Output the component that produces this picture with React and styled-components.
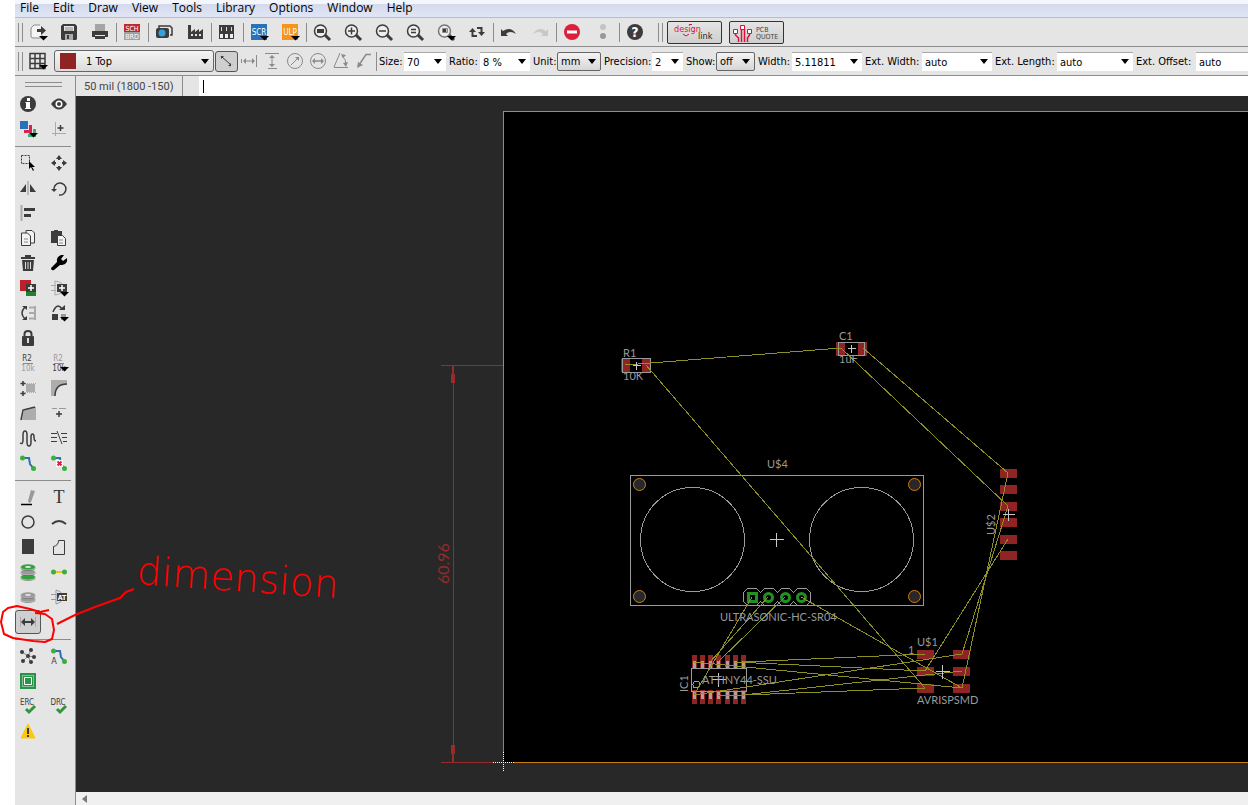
import React from "react";
import styled, { createGlobalStyle, css } from "styled-components";

const DARK = "#3c3c3c";
const MID = "#8a8a8a";
const SILK = "#9a9a9a";
const COPPER = "#8f2424";
const WIRE = "#8f8f24";

const IconText = styled.text`
  font-family: ${(p) => (p.$serif ? '"Liberation Serif", serif' : '"DejaVu Sans Condensed", sans-serif')};
  font-size: ${(p) => p.$size}px;
  font-weight: ${(p) => (p.$bold ? "bold" : "normal")};
  text-anchor: middle;
`;

function Lens({ grey, children }) {
  return (
    <>
      <path d="M3 3l5 5" stroke={DARK} strokeWidth="3" />
      <circle cx="-1.5" cy="-1" r="6" fill="#eee" stroke={grey ? "#777" : DARK} strokeWidth="1.5" />
      {children}
    </>
  );
}

function Route() {
  return (
    <>
      <path d="M-5 -5h6l1 6 4 5" fill="none" stroke="#2a72b8" strokeWidth="2" />
      <circle cx="-5.5" cy="-5" r="2.5" fill="#3aaf3c" />
      <circle cx="5.5" cy="5.5" r="2.5" fill="#3aaf3c" />
    </>
  );
}

function Stack({ ys, colors }) {
  return ys.map((y, i) => (
    <g key={y}>
      <ellipse cy={y + 1} rx="7.5" ry="3" fill={DARK} opacity="0.6" />
      <ellipse cy={y} rx="7.5" ry="3" fill={colors[i]} stroke="#e5e5e5" strokeWidth="0.5" />
      {i === ys.length - 1 && <ellipse cy={y} rx="3" ry="1" fill="#e5e5e5" />}
    </g>
  ));
}

/* Every icon is drawn around its own centre (0, 0). */
const icons = {
  export: (
    <>
      <path d="M2 -7h-6l-3 3v8q0 2 2 2h7q2 0 2-2v-1" fill="#f4f4f4" stroke={MID} />
      <path d="M-1 -3h4v-3l5 4.5-5 4.5v-3h-4z" fill={DARK} />
    </>
  ),
  save: (
    <>
      <path d="M-8 -6l2-2h12l2 2v13l-1 1h-14l-1-1z" fill={DARK} />
      <path d="M-5 -6h10v5h-10z" fill="#e5e5e5" />
      <path d="M-4 -4h8M-4 -2h8" stroke={MID} />
      <path d="M-4 2h8v6h-8z" fill="#aaa" />
      <path d="M-2 3h2v4h-2z" fill={DARK} />
    </>
  ),
  print: (
    <>
      <path d="M-5 -8h10v7h-10z" fill="#a5a5a5" />
      <path d="M-8 -1h16v6h-3v-2h-10v2h-3z" fill={DARK} />
      <path d="M-5 4h10v3h-10z" fill={DARK} />
    </>
  ),
  schbrd: (
    <>
      <path d="M-8 -8h16v8h-16z" fill="#c1272d" />
      <path d="M-8 0h16v8h-16z" fill="#a0a0a0" />
      <IconText x="0" y="-1" $size={7} fill="#fff">SCH</IconText>
      <IconText x="0" y="7" $size={7} fill="#fff">BRD</IconText>
    </>
  ),
  camera: (
    <>
      <path d="M-5 -4v-2h11l2 2v7h-2" fill="none" stroke={DARK} strokeWidth="1.5" />
      <rect x="-8" y="-4" width="13" height="10" rx="2" fill={DARK} />
      <circle cx="-2" cy="1" r="3.5" fill="#35a0de" />
    </>
  ),
  factory: (
    <>
      <path d="M-7 7v-14h3v7l4-3v3l4-3v3l4-3v10z" fill={DARK} />
      <path d="M-4 2h2v2h-2zM0 2h2v2h-2zM4 2h2v2h-2z" fill="#e5e5e5" />
    </>
  ),
  library: (
    <>
      {[-8, -3, 2].map((x) => (
        <g key={x}>
          <rect x={x + 0.5} y="-6.5" width="4" height="13" fill="#eee" stroke={DARK} />
          <path d={`M${x + 0.5} -6h4v8h-4z`} fill={DARK} />
          <path d={`M${x + 2.5} -5v4`} stroke="#ddd" />
        </g>
      ))}
    </>
  ),
  scr: (
    <>
      <path d="M-8 -8h16v16h-16z" fill="#2a72b8" />
      <IconText x="0" y="3" $size={8} fill="#fff">SCR</IconText>
    </>
  ),
  ulp: (
    <>
      <path d="M-8 -8h16v16h-16z" fill="#f7941d" />
      <IconText x="0" y="3" $size={8} fill="#fff">ULP</IconText>
    </>
  ),
  zoomFit: <Lens><path d="M-5 -3h7v4h-7z" fill={DARK} /></Lens>,
  zoomIn: <Lens><path d="M-5 -1h7M-1.5 -4.5v7" stroke={DARK} strokeWidth="1.5" /></Lens>,
  zoomOut: <Lens><path d="M-5 -1h7" stroke={DARK} strokeWidth="1.5" /></Lens>,
  zoomRedraw: <Lens><path d="M-4 -2.5h5M-4 .5h5" stroke={DARK} strokeWidth="1.5" /></Lens>,
  zoomSelect: (
    <Lens grey>
      <path d="M-3.5 -3.5h5v4h-5z" fill="#bbb" stroke={MID} />
      <path d="M-3 -3h3v3h-3z" fill={DARK} />
    </Lens>
  ),
  refresh: (
    <>
      <path d="M-4.5 -1v5h4.500M4.5 1v-5h-4.500" fill="none" stroke={DARK} strokeWidth="2" />
      <path d="M-8 0h7l-3.5-4zM1 0h7l-3.5 4z" fill={DARK} />
    </>
  ),
  undo: <path d="M-8 -3v7h7l-2-2q4-4 10 0q-5-8-13-3z" fill={DARK} />,
  redo: <path d="M8 -3v7h-7l2-2q-4-4-10 0q5-8 13-3z" fill="#c8c8c8" />,
  stop: (
    <>
      <circle r="8" fill="#dc1f3a" />
      <path d="M-5 -1.5h10v3h-10z" fill="#fff" />
    </>
  ),
  signal: (
    <>
      <circle cy="-5" r="3" fill="#c4c4c4" />
      <circle cy="4" r="3" fill="#999" />
    </>
  ),
  help: (
    <>
      <circle r="8" fill={DARK} />
      <IconText x="0" y="5" $size={14} $bold fill="#fff">?</IconText>
    </>
  ),
  grid: (
    <path
      d="M-8 -7.5h15v15h-15zM-8 -2.5h15M-8 2.5h15M-3 -7.5v15M2 -7.5v15"
      fill="none"
      stroke={DARK}
      strokeWidth="1.5"
    />
  ),
  dimParallel: (
    <>
      <path d="M-4 -4l8 7" stroke={DARK} />
      <path d="M-5 -5h3l-3 3zM5 5h-3l3-3z" fill={DARK} />
      <path d="M-7 -3l4-4M3 7l4-4" stroke="#aaa" strokeDasharray="1 1" />
    </>
  ),
  dimHorizontal: (
    <>
      <path d="M-5 0h10" stroke={MID} />
      <path d="M-6 0l3-3v6zM6 0l-3-3v6z" fill={MID} />
      <path d="M7.5 -6v12" stroke={MID} />
      <path d="M-7.5 -2v4" stroke={MID} />
    </>
  ),
  dimVertical: (
    <>
      <path d="M0 -4v8M-7 -7.5h14M-4 7.5h9" stroke={MID} />
      <path d="M0 -6l3 3h-6zM0 6l3-3h-6z" fill={MID} />
    </>
  ),
  dimRadius: (
    <>
      <circle r="7.5" fill="none" stroke={MID} />
      <path d="M-4 4l7-7" stroke={MID} />
      <path d="M4 -4v4l-4-4z" fill={MID} />
    </>
  ),
  dimDiameter: (
    <>
      <circle r="7.5" fill="none" stroke={MID} />
      <path d="M-4 0h8" stroke={MID} strokeWidth="1.5" />
      <path d="M-6 0l3-3v6zM6 0l-3-3v6z" fill={MID} />
    </>
  ),
  dimAngle: (
    <>
      <path d="M-7 6.5h14M-7 6l6-14M1 -5q4 3 4 8" fill="none" stroke={MID} />
      <path d="M0 -7l5 1-3 3zM7 1l-2 5-3-4z" fill={MID} />
    </>
  ),
  dimLeader: (
    <>
      <path d="M7 -6.5h-5l-6 9" fill="none" stroke={MID} strokeWidth="1.5" />
      <path d="M-7 7l1-6 5 3z" fill={MID} />
    </>
  ),
  info: (
    <>
      <circle r="8" fill={DARK} />
      <path d="M-1 -6h3v3h-3zM-2 -2h4v6h1v1h-6v-1h1v-5h-1z" fill="#fff" />
    </>
  ),
  show: (
    <>
      <path d="M-8 0q8-11 16 0q-8 11-16 0z" fill={DARK} />
      <circle r="3.5" fill="#fff" />
      <circle r="2" fill={DARK} />
    </>
  ),
  layers: (
    <>
      <path d="M-8 -8h8v8h-8z" fill="#2a72b8" />
      <path d="M1 -4h3v8h-8v-3h5z" fill="#dc1f54" />
      <path d="M5 0h3v8h-8v-3h5z" fill="#36b070" />
    </>
  ),
  mark: (
    <>
      <path d="M-3.5 -7v14M-7 4.5h14" stroke="#aaa" />
      <path d="M1.5 -4v6M-1.5 -1h6" stroke={DARK} strokeWidth="1.5" />
    </>
  ),
  group: (
    <>
      <path d="M-6.5 -7.5h8v8h-8z" fill="none" stroke={DARK} strokeDasharray="2 1" />
      <path d="M1 -2v8l2-2 2 4 1-1-2-3h3z" fill="#000" />
    </>
  ),
  move: (
    <>
      <path d="M0 -8l3 4h-6zM0 8l3-4h-6zM-8 0l4-3v6zM8 0l-4-3v6z" fill={DARK} />
      <path d="M0 -5v2M0 5v-2M-5 0h2M5 0h-2" stroke={DARK} strokeWidth="2" />
    </>
  ),
  mirror: (
    <>
      <path d="M-2 -4v8h-6zM2 -4v8h6z" fill={DARK} />
      <path d="M0 -7v14" stroke="#aaa" strokeWidth="1.5" />
    </>
  ),
  rotate: (
    <>
      <path d="M-5 2a6 6 0 1 1 5 5" fill="none" stroke={DARK} strokeWidth="1.5" />
      <path d="M-8 1h6l-3 3z" fill={DARK} />
    </>
  ),
  align: (
    <>
      <path d="M-6.5 -8v16" stroke="#aaa" strokeWidth="2" />
      <path d="M-4 -5h11v3h-11zM-4 1h7v3h-7z" fill={DARK} />
    </>
  ),
  copy: (
    <>
      <path d="M-2 -7.5h6l2.5 2.5v10h-8.5z" fill="#f2f2f2" stroke={DARK} />
      <path d="M-6.5 -5h6l3 3v9.5h-9z" fill="#f2f2f2" stroke={DARK} />
      <path d="M-4 1h4M-4 4h4" stroke={MID} />
    </>
  ),
  paste: (
    <>
      <path d="M-8 -7h3v-1h4v1h4v12h-11z" fill={DARK} />
      <path d="M-1.5 -2.5h5l3 3v7h-8z" fill="#f2f2f2" stroke={DARK} />
      <path d="M0 2h4M0 5h4" stroke={MID} />
    </>
  ),
  trash: (
    <>
      <path d="M-7 -6h4v-2h6v2h4v2h-14zM-6 -3h12l-1 11h-10z" fill={DARK} />
      <path d="M-2.5 -1v7M0 -1v7M2.5 -1v7" stroke="#ddd" />
    </>
  ),
  wrench: (
    <path
      d="M-8 5l6-6q-1-5 4-7l3 0-3 4 2 2 4-3q1 6-5 7h-2l-6 5q-3 1-3-2z"
      fill="#000"
    />
  ),
  add: (
    <>
      <path d="M-8 -8h11v11h-11z" fill="#bd1f2b" />
      <path d="M-2 0h10v8h-10z" fill="#23802b" />
      <path d="M-2 -4h10v8h-10z" fill={DARK} />
      <path d="M3 -3v6M0 0h6" stroke="#fff" strokeWidth="1.5" />
    </>
  ),
  addGate: (
    <>
      <path d="M-8 -2.5h5M-8 2.5h5M-4 -7q8 1 10 7q-2 6-10 7z" fill="none" stroke="#aaa" />
      <path d="M-2 -4h10v8h-10z" fill={DARK} />
      <path d="M3 -3v6M0 0h6" stroke="#fff" strokeWidth="1.5" />
    </>
  ),
  pinswap: (
    <>
      <path d="M-3 -6q-6 6 0 12" fill="none" stroke={DARK} strokeWidth="1.5" />
      <path d="M-6 -7h5v4zM-6 7h5v-4z" fill={DARK} />
      <path d="M7 -7v14M1 -5.5h6M1 0h6M1 5.5h6" stroke="#aaa" strokeWidth="2" />
    </>
  ),
  replace: (
    <>
      <path d="M-6 -1q4-10 9-3" fill="none" stroke={DARK} strokeWidth="1.5" />
      <path d="M0 -3h6v-5z" fill={DARK} />
      <path d="M-7 1h6v6h-6z" fill={DARK} />
      <path d="M2 1h5v6h-5z" fill="#999" />
    </>
  ),
  lock: (
    <>
      <path d="M-3.5 -1v-3q0-3 3.5-3t3.5 3v3" fill="none" stroke={DARK} strokeWidth="2" />
      <rect x="-6" y="-2" width="12" height="10" rx="1" fill={DARK} />
      <path d="M-1 0h2v5h-2z" fill="#ddd" />
    </>
  ),
  name: (
    <>
      <IconText x="-1" y="-2" $size={8} fill={DARK}>R2</IconText>
      <path d="M-5 .5h10" stroke={MID} />
      <IconText x="0" y="8" $size={8} fill="#999">10k</IconText>
    </>
  ),
  value: (
    <>
      <IconText x="-1" y="-2" $size={8} fill="#999">R2</IconText>
      <path d="M-5 .5h10" stroke={MID} />
      <IconText x="0" y="8" $size={8} fill={DARK}>10k</IconText>
    </>
  ),
  smash: (
    <>
      <path d="M-2 -4h9v8h-9z" fill="#b0acac" />
      <path d="M-3 -4.5h11M-3 4.5h11" stroke="#b0acac" strokeDasharray="1 1" />
      <path d="M-5 -7v5M-7.5 -4.5h5M-5 3v5M-7.5 5.5h5" stroke={DARK} strokeWidth="1.5" />
    </>
  ),
  miter: (
    <>
      <path d="M-8 -8h16v4q-12 0-12 12h-4z" fill="#b0acac" />
      <path d="M8 -4q-12 0-12 12" fill="none" stroke={DARK} strokeWidth="1.5" />
    </>
  ),
  split: (
    <>
      <path d="M-4 -4l12-2v13h-14z" fill="#b0acac" />
      <path d="M-7 7l2-10 12-3" fill="none" stroke={DARK} strokeWidth="1.5" />
    </>
  ),
  optimize: (
    <>
      <path d="M-7 -4.5h5M0 -4.5h7" stroke="#999" />
      <path d="M0 -2v6M-3 1h6" stroke={DARK} strokeWidth="1.5" />
    </>
  ),
  meander: (
    <path
      d="M-8 5q3 2 3-3v-5q0-4 2-4t2 4v7q0 4 2 4t2-4v-5q0-3 1.500-3t1.500 3q0 4 2 4"
      fill="none"
      stroke={DARK}
      strokeWidth="1.5"
    />
  ),
  ripLines: (
    <path
      d="M-8 -4.5h6M-8 -.5h6M-8 3.5h6M-2 -7l5 13M2 -4.5h6M3 -.5h5M4 3.5h4"
      stroke={DARK}
      fill="none"
    />
  ),
  route: <Route />,
  ripup: (
    <>
      <Route />
      <path d="M-3 -3h7v7h-7z" fill="#fff" />
      <path d="M-1.5 -1.5l4 4M2.5 -1.5l-4 4" stroke="#dc1f3a" strokeWidth="2" />
    </>
  ),
  wire: (
    <>
      <path d="M3 -7l4 1-4 11-2 1-1-2z" fill="#999" />
      <path d="M-7 7.5h11" stroke="#000" strokeWidth="1.5" />
    </>
  ),
  text: <IconText x="0" y="6" $size={18} $serif fill="#333">T</IconText>,
  circle: <circle r="6" fill="none" stroke={DARK} strokeWidth="1.5" />,
  arc: <path d="M-7 2q7-6 14 0" fill="none" stroke={DARK} strokeWidth="2" />,
  rect: <path d="M-6 -8h12v15h-12z" fill={DARK} />,
  polygon: <path d="M-5.5 7.5v-8q5-1 5-6h6v14z" fill="none" stroke={DARK} />,
  via: <Stack ys={[5, 0, -5]} colors={["#31a33a", "#999", "#31a33a"]} />,
  airwire: (
    <>
      <path d="M-6 0h12" stroke="#f4c20d" strokeWidth="2" />
      <circle cx="-5.5" r="2.5" fill="#3aaf3c" />
      <circle cx="5.5" r="2.5" fill="#3aaf3c" />
    </>
  ),
  hole: <Stack ys={[2, -2]} colors={["#999", "#999"]} />,
  attribute: (
    <>
      <path d="M-8 -2.5h5M-8 2.5h5M-3 -7q7 2 7 7q0 5-7 7z" fill="none" stroke="#999" />
      <path d="M-2 -4h10v8h-10z" fill={DARK} />
      <IconText x="3" y="3" $size={7} $bold fill="#fff">AT</IconText>
    </>
  ),
  dimension: (
    <>
      <path d="M-4 0h8" stroke={DARK} strokeWidth="2" />
      <path d="M-7 0l4-4v8zM7 0l-4-4v8z" fill={DARK} />
      <path d="M-7.5 -5v10M7.5 -5v10" stroke="#aaa" />
    </>
  ),
  ratsnest: (
    <>
      <path d="M-6 -4l6 4 3-6M-5 5l5-5 7 1M0 0l3 7" fill="none" stroke={MID} />
      {[[-6, -4], [3, -6], [0, 0], [6, 1], [-5, 5], [3, 6]].map(([x, y]) => (
        <circle key={`${x}${y}`} cx={x} cy={y} r="2" fill={DARK} />
      ))}
    </>
  ),
  autoroute: (
    <>
      <Route />
      <IconText x="-5" y="8" $size={9} fill={DARK}>A</IconText>
    </>
  ),
  drcPad: (
    <>
      <path d="M-8 -8h16v16h-16z" fill="#2b9249" />
      <rect x="-5.5" y="-5.5" width="11" height="11" fill="none" stroke="#d5f0dc" strokeDasharray="1 1" />
      <path d="M-3.5 -3.5h7v7h-7z" fill="#2b9249" stroke="#fff" />
    </>
  ),
  erc: (
    <>
      <IconText x="-1" y="-1" $size={8} fill={DARK}>ERC</IconText>
      <path d="M-2 3l3 3 6-6" fill="none" stroke="#31963a" strokeWidth="3" />
    </>
  ),
  drc: (
    <>
      <IconText x="-1" y="-1" $size={8} fill={DARK}>DRC</IconText>
      <path d="M-2 3l3 3 6-6" fill="none" stroke="#31963a" strokeWidth="3" />
    </>
  ),
  warning: (
    <>
      <path d="M0 -7l7 14h-14z" fill="#fbc70f" stroke="#fbc70f" strokeLinejoin="round" />
      <path d="M-1 -3h2v6h-2zM-1 4h2v2h-2z" fill={DARK} />
    </>
  ),
};

function Icon({ name, menu }) {
  return (
    <IconSvg viewBox="-10 -10 20 20" aria-hidden="true">
      {icons[name]}
      {menu && <path d="M1 4h9l-4.5 4.5z" fill="#000" />}
    </IconSvg>
  );
}

const menus = ["File", "Edit", "Draw", "View", "Tools", "Library", "Options", "Window", "Help"];

const actions = [
  ["export", "Open", true], ["save", "Save"], ["print", "Print"], null,
  ["schbrd", "Switch to schematic"], null,
  ["camera", "CAM processor"], ["factory", "Manufacturing"], null,
  ["library", "Use library"], null,
  ["scr", "Run script", true], ["ulp", "Run ULP", true], null,
  ["zoomFit", "Fit"], ["zoomIn", "Zoom in"], ["zoomOut", "Zoom out"],
  ["zoomRedraw", "Redraw"], ["zoomSelect", "Select area", true], ["refresh", "Refresh"], null,
  ["undo", "Undo"], ["redo", "Redo"], null,
  ["stop", "Cancel"], ["signal", "Go"], null,
  ["help", "Help"],
];

const dimModes = ["dimParallel", "dimHorizontal", "dimVertical", "dimRadius", "dimDiameter", "dimAngle", "dimLeader"];

const params = [
  { label: "Size:", value: "70", labelWidth: 25, width: 42 },
  { label: "Ratio:", value: "8 %", labelWidth: 31, width: 50 },
  { label: "Unit:", value: "mm", labelWidth: 24, width: 44, raised: true },
  { label: "Precision:", value: "2", labelWidth: 48, width: 31 },
  { label: "Show:", value: "off", labelWidth: 30, width: 39, raised: true },
  { label: "Width:", value: "5.11811", labelWidth: 34, width: 70 },
  { label: "Ext. Width:", value: "auto", labelWidth: 57, width: 70 },
  { label: "Ext. Length:", value: "auto", labelWidth: 62, width: 76 },
  { label: "Ext. Offset:", value: "auto", labelWidth: 60, width: 76 },
];

const toolGroups = [
  [["info"], ["show"], ["layers", true], ["mark"]],
  [
    ["group"], ["move"], ["mirror"], ["rotate"], ["align"], null, ["copy"], ["paste"],
    ["trash"], ["wrench"], ["add"], ["addGate", true], ["pinswap"], ["replace", true],
    ["lock"], null, ["name"], ["value", true], ["smash"], ["miter"], ["split"],
    ["optimize"], ["meander"], ["ripLines"], ["route"], ["ripup"],
  ],
  [
    ["wire"], ["text"], ["circle"], ["arc"], ["rect"], ["polygon"], ["via"],
    ["airwire"], ["hole"], ["attribute"], ["dimension"],
  ],
  [["ratsnest"], ["autoroute"], ["drcPad"], null, ["erc"], ["drc"], ["warning"]],
];

const airwires = [
  [625, 365, 841, 348], [646, 365, 925, 688], [841, 348, 1008, 506], [863, 348, 1008, 473],
  [1008, 473, 962, 688], [1008, 506, 962, 654], [1008, 539, 925, 671],
  [752, 597, 694, 695], [768, 597, 710, 662], [785, 597, 718, 662], [801, 597, 962, 688],
  [743, 662, 925, 654], [735, 662, 925, 671], [694, 662, 962, 688],
  [718, 696, 925, 688], [694, 695, 962, 654], [743, 695, 962, 671],
];

function Cross({ x, y, r = 7 }) {
  return <path d={`M${x - r} ${y}h${2 * r}M${x} ${y - r}v${2 * r}`} stroke="#c8c8c8" />;
}

function Board() {
  return (
    <BoardSvg role="img" aria-label="Board layout">
      <g transform="translate(-76 -96)" fill="none" shapeRendering="crispEdges">
        <rect x="503" y="111" width="4000" height="652" fill="#000" />
        <path d="M503.5 366V111.5h4000" stroke="#8c8c8c" />
        <path d="M503.5 366v386M513 762.5h4000" stroke="#c87a10" />

        <g stroke="#962b2b">
          <path d="M441 365.5h62M441 762.5h52M453.5 366v396" />
          <path d="M453 374v9M453 745v9" strokeWidth="4" />
          <path d="M453 366v8M453 754v8" strokeWidth="2" />
        </g>

        <g fill={COPPER}>
          <path d="M621 359h9v13h-9zM642 359h9v13h-9z" />
          <path d="M836 342h9v14h-9zM858 342h9v14h-9z" />
          {[469, 485, 502, 518, 535, 551].map((y) => (
            <rect key={y} x="1000" y={y} width="17" height="9" />
          ))}
          {[650, 667, 684].map((y) => (
            <path key={y} d={`M917 ${y}h17v9h-17zM953 ${y}h17v9h-17z`} />
          ))}
          {[692, 700, 708, 716, 725, 733, 741].map((x) => (
            <path key={x} d={`M${x} 655h5v14h-5zM${x} 690h5v14h-5z`} />
          ))}
        </g>
        <g fill="#b89a9a">
          {[693, 701, 709, 717, 726, 734, 742].map((x) => (
            <path key={x} d={`M${x} 661h3v7h-3zM${x} 691h3v8h-3z`} />
          ))}
        </g>

        <g stroke={SILK}>
          <path d="M622.5 358.5h28v14h-28zM838.5 342.5h26v13h-26z" />
          <path d="M630.5 475.5h293v130h-293z" />
          <path d="M691.5 668.5h55v23h-55z" />
          <circle cx="692.5" cy="539.5" r="52" />
          <circle cx="861.5" cy="539.5" r="52" />
          <circle cx="696.5" cy="684.5" r="3.5" />
          <path
            d="M743.5 592.5l4-4h9l4 4 4-4h9l4 4 4-4h8l4 4 4-4h9l4 4v9l-4 4h-9l-4-4-4 4h-8l-4-4-4 4h-9l-4-4-4 4h-9l-4-4z"
          />
        </g>
        <g stroke="#d17f10" fill="#282828" shapeRendering="auto">
          {[[639.5, 484.5], [914.5, 484.5], [639.5, 596.5], [914.5, 596.5]].map(([x, y]) => (
            <circle key={`${x}-${y}`} cx={x} cy={y} r="6" />
          ))}
        </g>
        <g stroke="#249024" strokeWidth="3" fill="#000" shapeRendering="auto">
          <rect x="748.5" y="593.5" width="8" height="8" />
          {[768.5, 785.5, 801.5].map((x) => (
            <circle key={x} cx={x} cy="597.5" r="4" />
          ))}
        </g>

        <g stroke={WIRE}>
          {airwires.map((w) => (
            <line key={w.join()} x1={w[0]} y1={w[1]} x2={w[2]} y2={w[3]} />
          ))}
        </g>

        <Cross x={636.5} y={365.5} r={4} />
        <Cross x={851.5} y={348.5} r={4} />
        <Cross x={776.5} y={539.5} />
        <Cross x={718.5} y={679.5} />
        <Cross x={942.5} y={671.5} />
        <Cross x={1008.5} y={514.5} r={6} />
        <path d="M493 762.5h21M503.5 752v20" stroke="#282828" />
        <path d="M493 762.5h21M503.5 752v20" stroke="#fff" strokeDasharray="1 1" />

        <SilkText x="623" y="357">R1</SilkText>
        <SilkText x="623" y="380">10K</SilkText>
        <SilkText x="839" y="340">C1</SilkText>
        <SilkText x="839" y="363">1uF</SilkText>
        <SilkText x="767" y="468">U$4</SilkText>
        <SilkText x="720" y="621">ULTRASONIC-HC-SR04</SilkText>
        <SilkText x="917" y="646">U$1</SilkText>
        <SilkText x="908" y="654">1</SilkText>
        <SilkText x="917" y="704">AVRISPSMD</SilkText>
        <SilkText x="702" y="684">ATTINY44-SSU</SilkText>
        <SilkText transform="translate(688 692) rotate(-90)">IC1</SilkText>
        <SilkText transform="translate(995 535) rotate(-90)">U$2</SilkText>
        <DimText transform="translate(449 584) rotate(-90)">60.96</DimText>
      </g>
    </BoardSvg>
  );
}

function Caret() {
  return (
    <CaretSvg viewBox="0 0 8 5" aria-hidden="true">
      <path d="M0 0h8L4 5z" fill="#000" />
    </CaretSvg>
  );
}

export default function App() {
  return (
    <Page>
      <GlobalStyle />
      <MenuBar>
        {menus.map((m) => (
          <MenuItem key={m}>{m}</MenuItem>
        ))}
      </MenuBar>

      <ToolBar>
        <Grip />
        {actions.map((a, i) =>
          a ? (
            <ActionButton key={a[0]} aria-label={a[1]}>
              <Icon name={a[0]} menu={a[2]} />
            </ActionButton>
          ) : (
            <Divider key={i} />
          )
        )}
        <Services>
          <Grip />
          <BrandButton aria-label="design link">
            <svg width="52" height="20" viewBox="0 0 52 20">
              <BrandText x="5" y="10" $size={9} fill="#e0103a">design</BrandText>
              <BrandText x="29" y="17" $size={9} fill="#222">link</BrandText>
              <path d="M14 12l3 2 3-2M20 2.5h3" stroke="#e0103a" fill="none" />
            </svg>
          </BrandButton>
          <BrandButton aria-label="PCB quote">
            <svg width="52" height="20" viewBox="0 0 52 20">
              <path
                d="M4.5 11v2l3 3v4M10.5 7v13M13.5 7v13M18.5 11v2l-2 3v4"
                stroke="#e0103a"
                strokeWidth="1.5"
                fill="none"
              />
              <path d="M2.5 7.5h4v4h-4zM9.500 3.5h4v4h-4zM16.5 7.5h4v4h-4z" fill="#fff" stroke="#e0103a" />
              <BrandText x="25" y="10" $size={7} fill="#444">PCB</BrandText>
              <BrandText x="25" y="17" $size={7} fill="#444">QUOTE</BrandText>
            </svg>
          </BrandButton>
        </Services>
      </ToolBar>

      <ToolBar>
        <Grip />
        <ActionButton aria-label="Grid">
          <Icon name="grid" menu />
        </ActionButton>
        <LayerBox>
          <Swatch />
          <LayerSelect aria-label="Layer">
            <option>1 Top</option>
          </LayerSelect>
          <Caret />
        </LayerBox>
        {dimModes.map((m, i) => (
          <ModeButton key={m} aria-label={m} $pressed={i === 0}>
            <Icon name={m} />
          </ModeButton>
        ))}
        <ParamDivider />
        {params.map((p) => (
          <Param key={p.label}>
            <ParamLabel $width={p.labelWidth}>{p.label}</ParamLabel>
            <ParamBox $width={p.width} $raised={p.raised}>
              <ParamSelect>
                <option>{p.value}</option>
              </ParamSelect>
              <Caret />
            </ParamBox>
          </Param>
        ))}
      </ToolBar>

      <Workspace>
        <SideBar>
          <SideGrip />
          {toolGroups.map((group, g) => (
            <ToolGroup key={g}>
              {group.map((t, i) =>
                t ? (
                  <ToolButton key={t[0]} aria-label={t[0]} $pressed={t[0] === "dimension"}>
                    <Icon name={t[0]} menu={t[1]} />
                  </ToolButton>
                ) : (
                  <span key={i} />
                )
              )}
            </ToolGroup>
          ))}
        </SideBar>
        <Editor>
          <CommandBar>
            <Coordinates>50 mil (1800 -150)</Coordinates>
            <CommandBox>
              <TextCursor />
              <CommandInput aria-label="Command" />
            </CommandBox>
          </CommandBar>
          <Board />
          <ScrollBar>
            <ScrollButton aria-label="Scroll left">
              <svg width="5" height="8" viewBox="0 0 5 8">
                <path d="M5 0v8L0 4z" fill="#777" />
              </svg>
            </ScrollButton>
          </ScrollBar>
        </Editor>
      </Workspace>

      <Annotation aria-hidden="true">
        <path
          d="M49 610l-9 2-10-3-13-3-9 2-5 4-2 10 3 12 9 4 20 3 12 1 7-3 2-9-2-11-7-5-10-1M57 624l18-9 20-8 25-9 6-6 8-3"
          fill="none"
          stroke="#f00"
          strokeWidth="2"
          strokeLinejoin="round"
        />
        <NoteText transform="translate(136 584) rotate(4)">dimension</NoteText>
      </Annotation>
    </Page>
  );
}

const GlobalStyle = createGlobalStyle`
  * {
    box-sizing: border-box;
  }
  body {
    margin: 0;
    background: #fff;
    overflow: hidden;
  }
  button, select, input {
    margin: 0;
    padding: 0;
    border: none;
    background: none;
    color: inherit;
    font: inherit;
    outline: none;
  }
`;

const Page = styled.div`
  display: flex;
  flex-direction: column;
  height: 100vh;
  padding-left: 15px;
  color: #000;
  font: 11px/14px "DejaVu Sans Condensed", "DejaVu Sans", sans-serif;
`;

const MenuBar = styled.nav`
  display: flex;
  flex: none;
  gap: 14px;
  height: 18px;
  padding: 0 5px 2px;
  border-bottom: 1px solid #b6bccb;
  background: linear-gradient(#f3f6fb 0 4px, #d4daec 4px, #e0e6f5);
`;

const MenuItem = styled.button`
  font: 12px/15px "Open Sans", sans-serif;
`;

const ToolBar = styled.div`
  display: flex;
  flex: none;
  align-items: center;
  height: 29px;
  border-bottom: 1px solid #8c8c8c;
  background: #e5e5e5;
  overflow: hidden;
`;

const Grip = styled.span`
  flex: none;
  width: 5px;
  height: 19px;
  margin-left: 3px;
  border: solid #8c8c8c;
  border-width: 0 1px;
`;

const buttonBase = css`
  display: flex;
  flex: none;
  align-items: center;
  justify-content: center;
`;

const pressedLook = css`
  border: 1px solid #555;
  border-radius: 3px;
  background: #cfcfcf;
`;

const ActionButton = styled.button`
  ${buttonBase}
  width: 31px;
  height: 28px;
  padding-right: 1px;
`;

const Divider = styled.span`
  flex: none;
  width: 1px;
  height: 19px;
  background: #8c8c8c;
`;

const ParamDivider = styled(Divider)`
  margin-right: 2px;
`;

const Services = styled.div`
  display: flex;
  align-items: center;
  gap: 7px;
  margin-left: 4px;

  > span + button {
    margin-left: -3px;
  }
`;

const BrandButton = styled.button`
  ${buttonBase}
  width: 55px;
  height: 23px;
  border: 1px solid #333;
  border-radius: 2px;
  background: linear-gradient(#e4e4e4, #cfcfcf);
`;

const IconSvg = styled.svg`
  flex: none;
  width: 20px;
  height: 20px;
  overflow: visible;
`;

const BrandText = styled.text`
  font-family: "DejaVu Sans Condensed", sans-serif;
  font-size: ${(p) => p.$size}px;
`;

const CaretSvg = styled.svg`
  grid-area: 1 / 1;
  align-self: center;
  justify-self: end;
  width: 8px;
  height: 5px;
  margin-right: 4px;
  pointer-events: none;
`;

const LayerBox = styled.span`
  display: grid;
  flex: none;
  width: 160px;
  height: 22px;
  margin-right: 1px;
  border: 1px solid #666;
  border-radius: 3px;
  background: linear-gradient(#f4f4f4, #dcdcdc);
`;

const Swatch = styled.span`
  grid-area: 1 / 1;
  align-self: center;
  width: 16px;
  height: 16px;
  margin-left: 5px;
  background: ${COPPER};
`;

const LayerSelect = styled.select`
  grid-area: 1 / 1;
  padding: 2px 0 0 31px;
  appearance: none;
`;

const ModeButton = styled.button`
  ${buttonBase}
  width: 23px;
  height: 21px;
  padding-right: 1px;
  ${(p) => p.$pressed && pressedLook}
`;

const Param = styled.label`
  display: flex;
  flex: none;
  align-items: center;
  margin-right: 3px;
`;

const ParamLabel = styled.span`
  width: ${(p) => p.$width}px;
  padding-top: 2px;
  white-space: nowrap;
`;

const ParamBox = styled.span`
  display: grid;
  width: ${(p) => p.$width}px;
  height: 19px;
  background: #fff;
  border-top: 1px solid #aaa;
  ${(p) =>
    p.$raised &&
    css`
      border: 1px solid #666;
      border-radius: 2px;
      background: linear-gradient(#f4f4f4, #d6d6d6);
    `}
`;

const ParamSelect = styled.select`
  grid-area: 1 / 1;
  width: 100%;
  padding: 2px 0 0 3px;
  appearance: none;
`;

const Workspace = styled.div`
  display: flex;
  flex: 1;
  min-height: 0;
`;

const SideBar = styled.aside`
  flex: none;
  width: 61px;
  padding-top: 6px;
  border-right: 1px solid #8c8c8c;
  background: #e5e5e5;
`;

const SideGrip = styled.div`
  height: 5px;
  margin: 0 13px 5px 10px;
  border: solid #8c8c8c;
  border-width: 1px 0;
`;

const ToolGroup = styled.div`
  display: grid;
  grid-template-columns: 26px 26px;
  grid-auto-rows: 25px;
  column-gap: 5px;

  & + & {
    margin: 4px 4px 0 0;
    padding-top: 4px;
    border-top: 1px solid #8c8c8c;
  }
`;

const ToolButton = styled.button`
  ${buttonBase}
  margin-bottom: 1px;
  ${(p) => p.$pressed && pressedLook}
`;

const Editor = styled.main`
  display: flex;
  flex: 1;
  flex-direction: column;
  min-width: 0;
  background: #282828;
`;

const CommandBar = styled.div`
  display: flex;
  flex: none;
  height: 20px;
  background: #e5e5e5;
`;

const Coordinates = styled.span`
  margin-right: 16px;
  padding: 4px 9px 0 8px;
  border-right: 1px solid #8c8c8c;
  color: #444;
  font-family: "Roboto", sans-serif;
`;

const CommandBox = styled.label`
  display: flex;
  flex: 1;
  align-items: center;
  gap: 2px;
  padding-left: 4px;
  background: #fff;
`;

const TextCursor = styled.span`
  width: 1px;
  height: 13px;
  background: #000;
`;

const CommandInput = styled.input`
  flex: 1;
  height: 100%;
`;

const BoardSvg = styled.svg`
  flex: 1;
  width: 100%;
  min-height: 0;
`;

const SilkText = styled.text`
  fill: ${SILK};
  font: 11px "Lato", sans-serif;
`;

const DimText = styled.text`
  fill: #962b2b;
  font: 16px "Lato", sans-serif;
`;

const ScrollBar = styled.div`
  display: flex;
  flex: none;
  height: 13px;
  background: #f0f0f0;
`;

const ScrollButton = styled.button`
  ${buttonBase}
  width: 16px;
`;

const Annotation = styled.svg`
  position: absolute;
  top: 0;
  left: 0;
  width: 100%;
  height: 100%;
  pointer-events: none;
`;

const NoteText = styled.text`
  fill: #f00;
  font: 200 39px "DejaVu Sans", sans-serif;
`;
